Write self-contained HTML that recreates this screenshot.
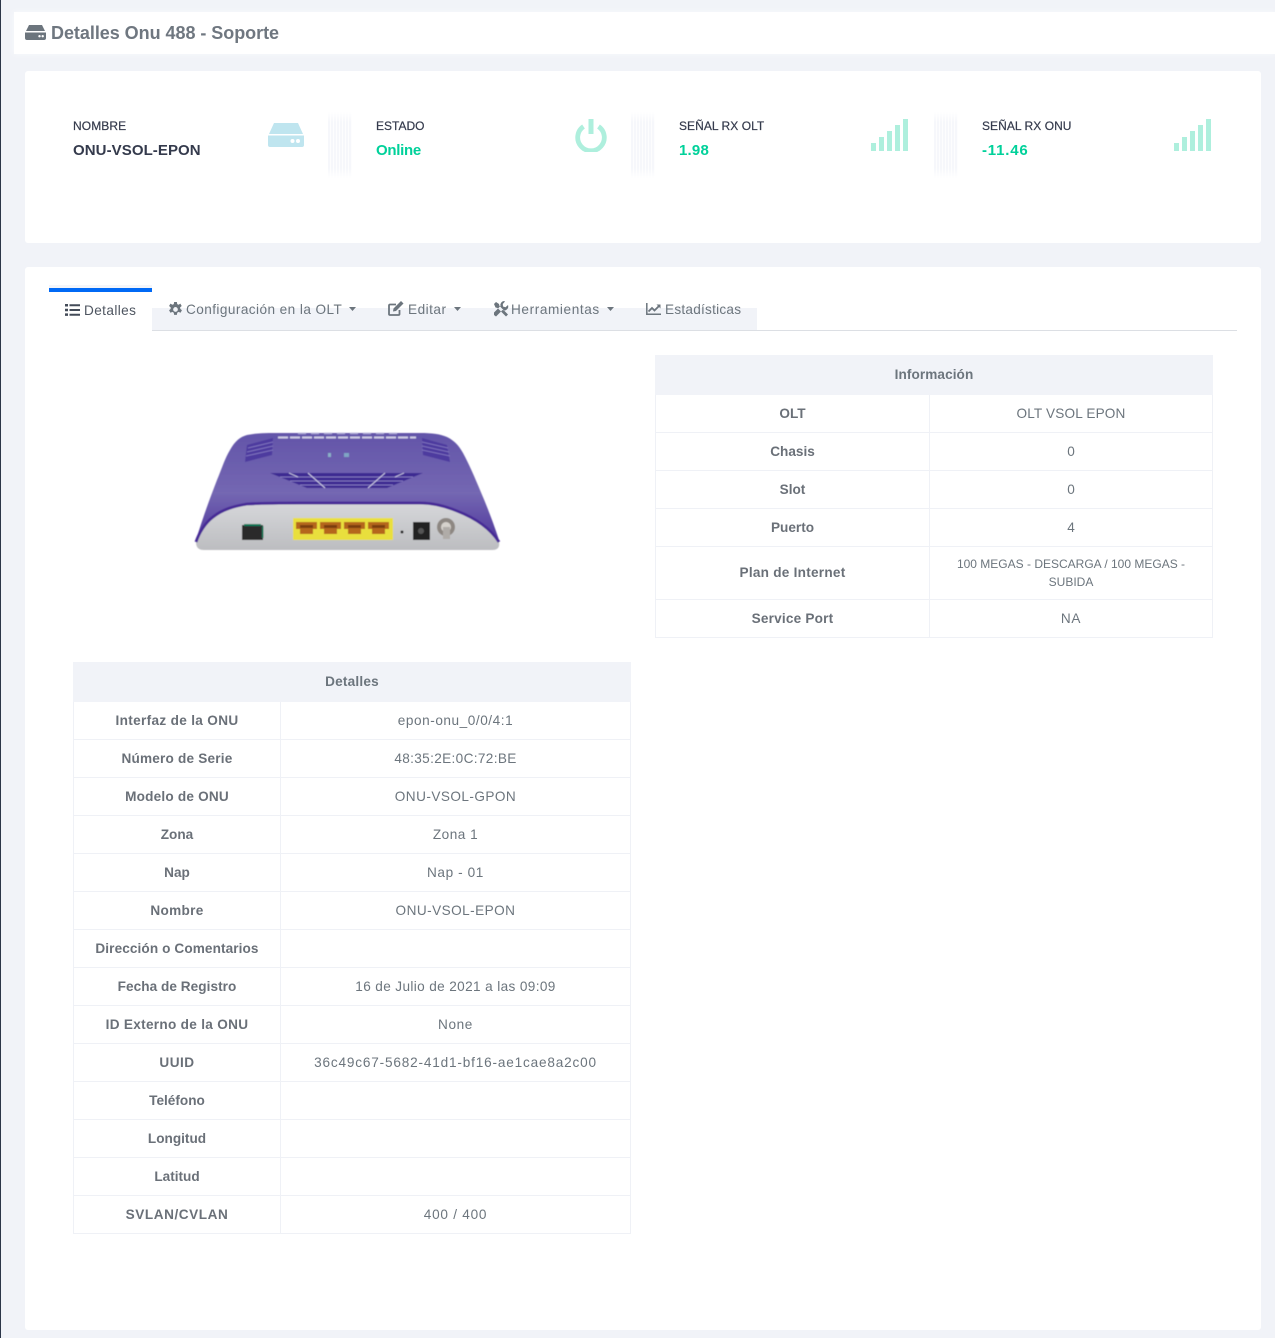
<!DOCTYPE html>
<html lang="es"><head><meta charset="utf-8"><title>Detalles Onu 488 - Soporte</title>
<style>
html,body{margin:0;padding:0;width:1275px;height:1338px;overflow:hidden;background:#f1f3f8;font-family:"Liberation Sans",sans-serif;color:#6c757d}
.a{position:absolute;white-space:nowrap}
#stripe{left:0;top:0;width:1px;height:1338px;background:#2c3648}
#head{left:14px;top:12px;width:1261px;height:42px;background:#fff;box-shadow:0 0 5px #f9fafc}
.card{background:#fff;border-radius:3px}
#c1{left:25px;top:71px;width:1236px;height:172px}
#c2{left:25px;top:267px;width:1236px;height:1063px}
.lab{font-size:12px;color:#343a4c;top:119px;line-height:14px;-webkit-text-stroke:.2px #343a4c}
.val{font-size:15px;top:142px;line-height:18px;font-weight:bold}
.div{top:112px;width:24px;height:66px;background:repeating-linear-gradient(90deg,#f6f7fb 0 2px,#fdfdfe 2px 3px);-webkit-mask-image:linear-gradient(#0000,#000 15%,#000 85%,#0000);mask-image:linear-gradient(#0000,#000 15%,#000 85%,#0000)}
.tab{font-size:13.6px;line-height:16px;top:302px;color:#6c757d}
table{position:absolute;border-collapse:collapse;table-layout:fixed;font-size:13.6px;color:#6c757d;text-align:center}
th,td{border:1px solid #eff1f6;padding:0;font-weight:normal}
thead th{background:#f1f3f8;font-weight:bold;height:36px;border-color:#f1f3f8;padding-bottom:2px}
tbody th{font-weight:bold;color:#6a7078}
tbody tr{height:38px}
</style></head><body>
<div class="a" id="stripe"></div>
<div class="a" id="head"></div>
<svg class="a" style="left:25px;top:25px" width="21" height="15" viewBox="0 0 21 15"><path fill="#6c757d" d="M4 0h13l3 6H1zM0 7.500h21V13a2 2 0 0 1-2 2H2a2 2 0 0 1-2-2z"/><circle cx="14.500" cy="11.200" r="1.200" fill="#fff"/><circle cx="17.700" cy="11.200" r="1.200" fill="#fff"/></svg>
<div class="a" style="left:51px;top:22px;font-size:18px;line-height:22px;font-weight:bold;color:#6f7780;letter-spacing:-.04px">Detalles Onu 488 - Soporte</div>

<div class="a card" id="c1"></div>
<div class="a lab" style="left:73px;letter-spacing:.1px">NOMBRE</div>
<div class="a val" style="left:73px;color:#343a4c;letter-spacing:.08px">ONU-VSOL-EPON</div>
<svg class="a" style="left:268px;top:123px" width="36" height="24" viewBox="0 0 36 24"><path fill="#bfe5ef" d="M6 0h24l5 11H1zM0 12.500h36V22a2 2 0 0 1-2 2H2a2 2 0 0 1-2-2z"/><circle cx="24.500" cy="18" r="2" fill="#fff"/><circle cx="30" cy="18" r="2" fill="#fff"/></svg>
<div class="a div" style="left:328px"></div>
<div class="a lab" style="left:376px">ESTADO</div>
<div class="a val" style="left:376px;color:#00d19a;letter-spacing:-.3px">Online</div>
<svg class="a" style="left:574px;top:118px" width="34" height="34" viewBox="0 0 34 34"><path fill="none" stroke="#aeefdd" stroke-width="4.800" d="M9.500 8.500a13.300 13.300 0 1 0 15 0"/><path stroke="#aeefdd" stroke-width="5" d="M17 1v15"/></svg>
<div class="a div" style="left:631px"></div>
<div class="a lab" style="left:679px;letter-spacing:.05px">SEÑAL RX OLT</div>
<div class="a val" style="left:679px;color:#00d19a;letter-spacing:.2px">1.98</div>
<svg class="a" style="left:871px;top:119px" width="38" height="32" viewBox="0 0 38 32"><path fill="#aeefdd" d="M0 24h5v8H0zM8 18h5v14H8zM16 12h5v20h-5zM24 6h5v26h-5zM32 0h5v32h-5z"/></svg>
<div class="a div" style="left:934px"></div>
<div class="a lab" style="left:982px;letter-spacing:.05px">SEÑAL RX ONU</div>
<div class="a val" style="left:982px;color:#00d19a;letter-spacing:.8px">-11.46</div>
<svg class="a" style="left:1174px;top:119px" width="38" height="32" viewBox="0 0 38 32"><path fill="#aeefdd" d="M0 24h5v8H0zM8 18h5v14H8zM16 12h5v20h-5zM24 6h5v26h-5zM32 0h5v32h-5z"/></svg>

<div class="a card" id="c2"></div>
<div class="a" style="left:152px;top:308px;width:605px;height:22px;background:#f1f3f8"></div>
<div class="a" style="left:49px;top:330px;width:1188px;height:1px;background:#dcdfe4"></div>
<div class="a" style="left:49px;top:285px;width:103px;height:3px;background:#f4f5f9"></div>
<div class="a" style="left:49px;top:288px;width:103px;height:44px;background:#fff"></div>
<div class="a" style="left:49px;top:288px;width:103px;height:4px;background:#0069f5"></div>

<svg class="a" style="left:65px;top:304px" width="15" height="12" viewBox="0 0 15 12"><path fill="#434b58" d="M0 0h3v2.500H0zM0 4.700h3v2.500H0zM0 9.400h3v2.500H0zM4.500 .3H15v2H4.500zM4.500 5H15v2H4.500zM4.500 9.700H15v2H4.500z"/></svg>
<div class="a tab" style="left:84px;top:303px;color:#4e5560;letter-spacing:.4px">Detalles</div>

<svg class="a" style="left:167.500px;top:301.500px" width="15" height="15" viewBox="0 0 14 14"><path fill="#6c757d" fill-rule="evenodd" d="M5.700 0h2.600l.3 2 1.300.6L11.500 1.500l1.300 2.200-1.500 1.300.2 1.400 1.500 1.300-1.300 2.300-1.800-.8-1.300.8-.3 2H5.700l-.3-2-1.300-.8-1.800.8L1 7.700l1.500-1.300V5L1 3.700l1.300-2.200L4.100 2.600l1.300-.6zM7 4.800a2.200 2.200 0 1 0 0 4.400 2.200 2.200 0 0 0 0-4.400z"/></svg>
<div class="a tab" style="left:186px;letter-spacing:.43px">Configuración en la OLT</div>
<svg class="a" style="left:349px;top:307px" width="7" height="4"><path fill="#6c757d" d="M0 0h7L3.500 4z"/></svg>

<svg class="a" style="left:388px;top:301px" width="16" height="15" viewBox="0 0 16 15"><path fill="none" stroke="#6c757d" stroke-width="1.800" d="M11.500 9v4a1 1 0 0 1-1 1H2a1 1 0 0 1-1-1V4.500a1 1 0 0 1 1-1h6"/><path fill="#6c757d" d="M13 0l2.500 2.500L8 10l-3 .5.500-3z"/></svg>
<div class="a tab" style="left:408px;letter-spacing:.5px">Editar</div>
<svg class="a" style="left:454px;top:307px" width="7" height="4"><path fill="#6c757d" d="M0 0h7L3.500 4z"/></svg>

<svg class="a" style="left:493px;top:301px" width="16" height="16" viewBox="0 0 16 16"><path fill="#6c757d" d="M1 3l2-2 3 2 .5 2 8.500 8.500-2 2L4.500 7 2.500 6.500zM11 0a4 4 0 0 0-3.500 5L1 11.500 1 14l2 1.500L9.500 9a4 4 0 0 0 5.500-5l-2.500 2.200L10 5.500 9.800 3 12 .5z"/></svg>
<div class="a tab" style="left:511px;letter-spacing:.6px">Herramientas</div>
<svg class="a" style="left:607px;top:307px" width="7" height="4"><path fill="#6c757d" d="M0 0h7L3.500 4z"/></svg>

<svg class="a" style="left:646px;top:303px" width="15" height="12" viewBox="0 0 15 12"><path fill="none" stroke="#6c757d" stroke-width="1.500" d="M.8 0v11.200H15"/><path fill="none" stroke="#6c757d" stroke-width="1.800" d="M2.500 8.500L6 5l2.500 2.500L13 3"/><path fill="#6c757d" d="M10.500 1.500H14.500V5.500z"/></svg>
<div class="a tab" style="left:665px;letter-spacing:.25px">Estadísticas</div>

<svg class="a" style="left:190px;top:428px" width="315" height="130" viewBox="0 0 315 130">
<defs>
<linearGradient id="g1" x1="0" y1="0" x2="0" y2="1"><stop offset="0" stop-color="#6355a9"/><stop offset=".55" stop-color="#7467b2"/><stop offset="1" stop-color="#4f369c"/></linearGradient>
<linearGradient id="g2" x1="0" y1="0" x2="0" y2="1"><stop offset="0" stop-color="#d6d7da"/><stop offset="1" stop-color="#bcbdc0"/></linearGradient>
<filter id="b"><feGaussianBlur stdDeviation=".6"/></filter>
<filter id="s"><feGaussianBlur stdDeviation="2"/></filter>
</defs>
<path d="M10 123H304" stroke="#c8c8c8" stroke-width="3" filter="url(#s)"/>
<g filter="url(#b)">
<path fill="url(#g1)" d="M6 112C12 92 20 70 27 52 32 40 35 30 40 22 45 13 50 9 57 7 66 5 78 5 90 5H230C242 5 250 6 257 9 265 13 269 18 273 25 279 36 285 50 290 62 297 78 303 94 309 112L300 114H12Z"/>
<path fill="url(#g2)" d="M6 114C9 105 15 95 23 89 33 81 45 78 57 76 75 75 90 75 110 75H230C244 75 255 78 267 83 285 90 300 100 309 114 310 120 307 122 302 122H14C9 122 6 120 6 114Z"/>
<path fill="none" stroke="#472b96" stroke-width="2.800" d="M6 114C9 105 15 95 23 89 33 81 45 78 57 76 75 75 90 75 110 75H230C244 75 255 78 267 83 285 90 300 100 309 114"/>
<path fill="#4d3a9f" d="M83 10L82 27 55 34 57 17zM232 10L233 27 260 34 257 17z"/>
<path stroke="#8a7fc4" stroke-width=".8" d="M58 20L83 14M57 24L83 18M56 28L83 22M232 14L258 20M232 18L259 24M232 22L260 28"/>
<path fill="#3d2c92" d="M80 45H233L197 60H117z"/>
<path stroke="#8478c0" stroke-width=".9" d="M90 49H223M100 53H213M110 57H203"/>
<path stroke="#d5d2ea" stroke-width=".9" d="M118 45L135 60M195 45L178 60M99 45L108 49M214 45L205 49"/>
<path stroke="#cfcce4" stroke-width="2" stroke-dasharray="10 2" d="M88 9.500H226"/>
<path stroke="#a8a4d2" stroke-width="1.500" stroke-dasharray="8 5" d="M108 5.500H208"/>
<rect x="138" y="25" width="3" height="4" fill="#8ab0c8"/><rect x="154" y="25" width="5" height="4" fill="#7fa5c4"/>
<rect x="52" y="97" width="21" height="15" fill="#2b2b2b"/>
<path fill="#0e7a5a" d="M54 96h17v2H54zM72 98h1.500v12H72z"/>
<rect x="103" y="90" width="100" height="22" fill="#e9df3d"/>
<path fill="#b5661c" d="M106 94h21v7h-4v5h-13v-5h-4zM130 94h21v7h-4v5h-13v-5h-4zM154 94h21v7h-4v5h-13v-5h-4zM178 94h21v7h-4v5h-13v-5h-4z"/>
<path fill="#7a3d0c" d="M110 97h13v3h-13zM134 97h13v3h-13zM158 97h13v3h-13zM182 97h13v3h-13z"/>
<circle cx="212" cy="104" r="1.500" fill="#222"/>
<rect x="223" y="94" width="17" height="18" fill="#222"/><circle cx="231" cy="103" r="3" fill="#555"/>
<circle cx="256" cy="99" r="9" fill="#8d8782"/><circle cx="256" cy="99" r="5" fill="#d6d2cc"/><rect x="253" y="99" width="7" height="12" fill="#b0aca8"/>
</g>
</svg>

<table style="left:655px;top:355px;width:557px">
<colgroup><col style="width:274px"><col style="width:283px"></colgroup>
<thead><tr><th colspan="2" style="letter-spacing:.08px">Información</th></tr></thead>
<tbody>
<tr><th>OLT</th><td style="letter-spacing:.15px">OLT VSOL EPON</td></tr>
<tr><th>Chasis</th><td>0</td></tr>
<tr><th>Slot</th><td>0</td></tr>
<tr><th>Puerto</th><td>4</td></tr>
<tr style="height:53px"><th style="letter-spacing:.25px;padding-bottom:2px">Plan de Internet</th><td style="font-size:12px;line-height:18px;padding:0 20px">100 MEGAS - DESCARGA / 100 MEGAS - SUBIDA</td></tr>
<tr><th style="letter-spacing:.2px">Service Port</th><td style="letter-spacing:.7px">NA</td></tr>
</tbody></table>

<table style="left:73px;top:662px;width:557px">
<colgroup><col style="width:207px"><col style="width:350px"></colgroup>
<thead><tr><th colspan="2" style="letter-spacing:.2px">Detalles</th></tr></thead>
<tbody>
<tr><th style="letter-spacing:.33px">Interfaz de la ONU</th><td style="letter-spacing:.55px">epon-onu_0/0/4:1</td></tr>
<tr><th style="letter-spacing:.2px">Número de Serie</th><td style="letter-spacing:.35px">48:35:2E:0C:72:BE</td></tr>
<tr><th style="letter-spacing:.2px">Modelo de ONU</th><td style="letter-spacing:.45px">ONU-VSOL-GPON</td></tr>
<tr><th>Zona</th><td style="letter-spacing:.5px">Zona 1</td></tr>
<tr><th>Nap</th><td style="letter-spacing:.6px">Nap - 01</td></tr>
<tr><th style="letter-spacing:.3px">Nombre</th><td style="letter-spacing:.45px">ONU-VSOL-EPON</td></tr>
<tr><th style="letter-spacing:.1px">Dirección o Comentarios</th><td></td></tr>
<tr><th style="letter-spacing:.05px">Fecha de Registro</th><td style="letter-spacing:.37px">16 de Julio de 2021 a las 09:09</td></tr>
<tr><th style="letter-spacing:.3px">ID Externo de la ONU</th><td style="letter-spacing:.6px">None</td></tr>
<tr><th style="letter-spacing:.5px">UUID</th><td style="letter-spacing:.82px">36c49c67-5682-41d1-bf16-ae1cae8a2c00</td></tr>
<tr><th>Teléfono</th><td></td></tr>
<tr><th>Longitud</th><td></td></tr>
<tr><th>Latitud</th><td></td></tr>
<tr><th style="letter-spacing:.55px">SVLAN/CVLAN</th><td style="letter-spacing:.75px">400 / 400</td></tr>
</tbody></table>
</body></html>
